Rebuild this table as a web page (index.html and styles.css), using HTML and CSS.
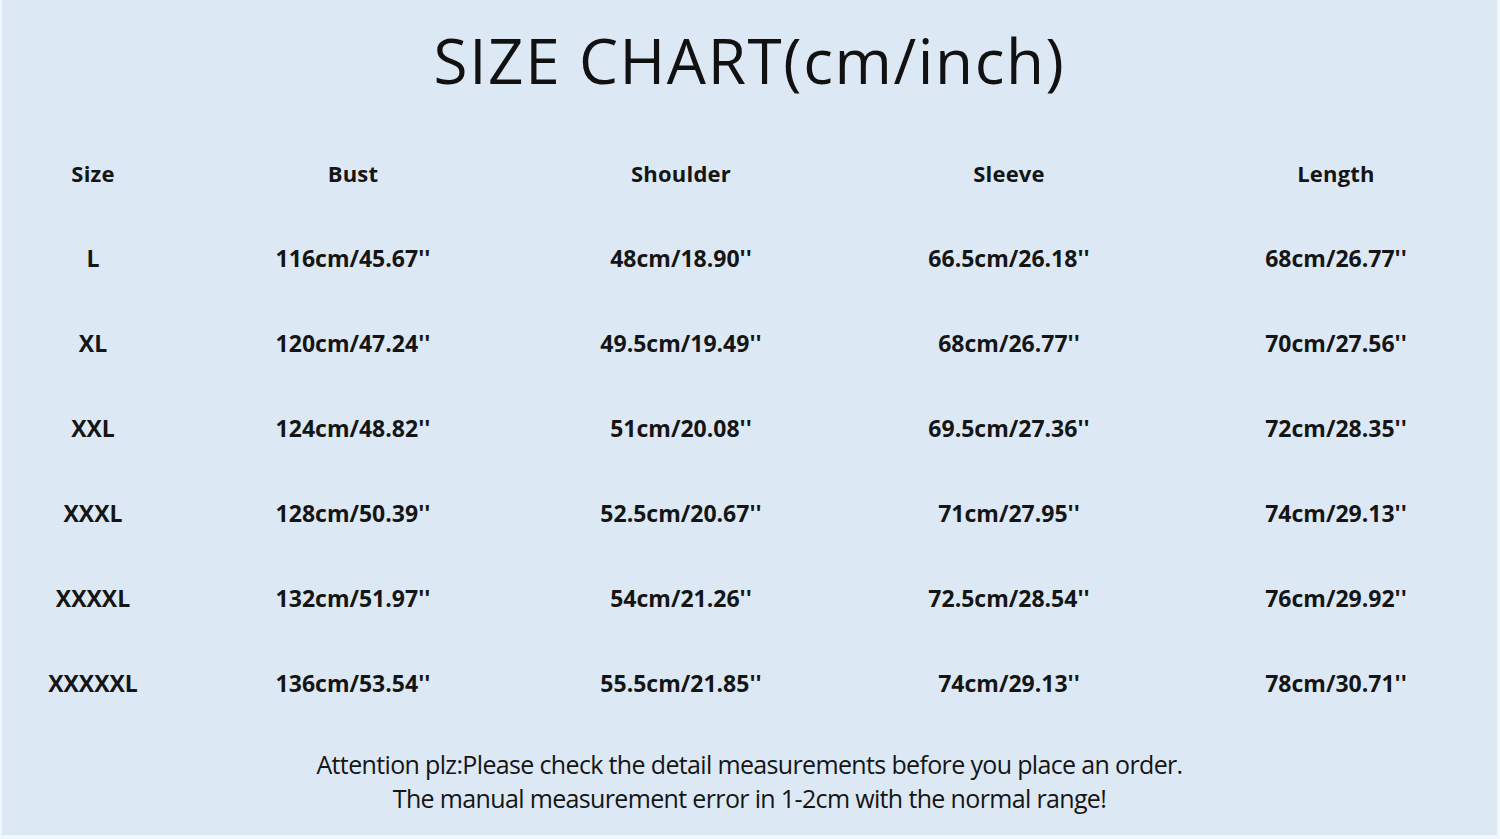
FILE: index.html
```html
<!DOCTYPE html>
<html>
<head>
<meta charset="utf-8">
<link rel="stylesheet" href="styles.css">
</head>
<body>
<div class="chart">
  <h1 class="title">SIZE CHART(cm/inch)</h1>
  <div class="table">
    <div class="cell head first">Size</div><div class="cell head">Bust</div><div class="cell head">Shoulder</div><div class="cell head">Sleeve</div><div class="cell head">Length</div>
    <div class="cell first">L</div><div class="cell">116cm/45.67''</div><div class="cell">48cm/18.90''</div><div class="cell">66.5cm/26.18''</div><div class="cell">68cm/26.77''</div>
    <div class="cell first">XL</div><div class="cell">120cm/47.24''</div><div class="cell">49.5cm/19.49''</div><div class="cell">68cm/26.77''</div><div class="cell">70cm/27.56''</div>
    <div class="cell first">XXL</div><div class="cell">124cm/48.82''</div><div class="cell">51cm/20.08''</div><div class="cell">69.5cm/27.36''</div><div class="cell">72cm/28.35''</div>
    <div class="cell first">XXXL</div><div class="cell">128cm/50.39''</div><div class="cell">52.5cm/20.67''</div><div class="cell">71cm/27.95''</div><div class="cell">74cm/29.13''</div>
    <div class="cell first">XXXXL</div><div class="cell">132cm/51.97''</div><div class="cell">54cm/21.26''</div><div class="cell">72.5cm/28.54''</div><div class="cell">76cm/29.92''</div>
    <div class="cell first">XXXXXL</div><div class="cell">136cm/53.54''</div><div class="cell">55.5cm/21.85''</div><div class="cell">74cm/29.13''</div><div class="cell">78cm/30.71''</div>
  </div>
  <div class="note">
    <p>Attention plz:Please check the detail measurements before you place an order.</p>
    <p>The manual measurement error in 1-2cm with the normal range!</p>
  </div>
</div>
</body>
</html>
```

FILE: styles.css
```css
html, body {
  margin: 0;
  padding: 0;
  background: #f1f7fc;
}
body {
  width: 1500px;
  height: 839px;
  overflow: hidden;
}
.chart {
  margin: 0 3px 0 2px;
  height: 835px;
  background: #dce9f4;
  color: #111;
  display: flex;
  flex-direction: column;
}
.title {
  margin: 0;
  height: 131px;
  display: flex;
  align-items: center;
  justify-content: center;
  padding-bottom: 12px;
  box-sizing: border-box;
  font-family: "Open Sans", sans-serif;
  font-weight: 400;
  font-style: normal;
  font-size: 62px;
  letter-spacing: 1.6px;
  color: #111;
}
.table {
  display: grid;
  grid-template-columns: 187px 328px 328px 328px 326px;
  grid-auto-rows: 85px;
  margin-top: -1px;
}
.cell {
  display: flex;
  align-items: center;
  justify-content: center;
  font-family: "Open Sans", sans-serif;
  font-weight: 700;
  font-size: 23px;
  color: #151515;
  letter-spacing: 0;
}
.first {
  padding-right: 5px;
}
.head {
  font-size: 22px;
  letter-spacing: 0.2px;
}
.note {
  padding-top: 22px;
  text-align: center;
  font-family: "Open Sans", sans-serif;
  font-weight: 400;
  font-size: 25px;
  color: #151515;
}
.note p {
  margin: 0;
  line-height: 34px;
  letter-spacing: -0.65px;
}
```
